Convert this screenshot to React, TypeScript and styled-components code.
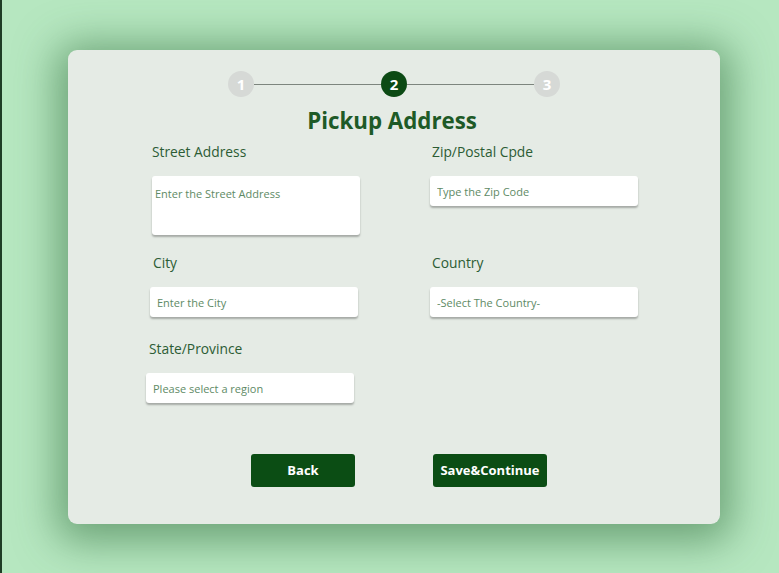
import React from "react";
import styled, { createGlobalStyle } from "styled-components";

const Global = createGlobalStyle`
  html, body { margin: 0; padding: 0; }
  body {
    background: #b6e7c0;
    font-family: "Open Sans", "Noto Sans", sans-serif;
    border-left: 2px solid #1f3d26;
    min-height: 573px;
    box-sizing: border-box;
  }
`;

const Page = styled.div`
  height: 573px;
  padding-top: 50px;
  padding-left: 66px;
  box-sizing: border-box;
`;

const Card = styled.div`
  width: 652px;
  height: 474px;
  background: #e5ebe5;
  border-radius: 9px;
  box-shadow: 0 6px 40px 12px rgba(50, 110, 60, 0.55);
  box-sizing: border-box;
  padding-top: 21px;
  display: flex;
  flex-direction: column;
`;

const Stepper = styled.div`
  display: flex;
  align-items: center;
  justify-content: center;
  padding-left: 0px;
`;

const Step = styled.div<{ $active?: boolean }>`
  width: 26px;
  height: 26px;
  border-radius: 50%;
  background: ${(p) => (p.$active ? "#0c4a14" : "#d6d9d6")};
  color: #ffffff;
  font-weight: 700;
  font-size: 15px;
  display: flex;
  align-items: center;
  justify-content: center;
  flex-shrink: 0;
`;

const Connector = styled.div`
  width: 127px;
  height: 1px;
  background: #7d857e;
`;

const Title = styled.h1`
  margin: 9px 0 0;
  text-align: center;
  font-size: 22.3px;
  font-weight: 700;
  color: #1e5a27;
  line-height: 30px;
  padding-right: 4px;
`;

const FormGrid = styled.div`
  display: grid;
  grid-template-columns: 210px 210px;
  column-gap: 71px;
  row-gap: 19px;
  margin-top: 7px;
  margin-left: 82px;
  align-items: start;
`;

const Field = styled.div<{ $dx?: number; $dy?: number }>`
  display: flex;
  flex-direction: column;
  margin-left: ${(p) => p.$dx ?? 0}px;
  margin-top: ${(p) => p.$dy ?? 0}px;
`;

const Label = styled.label<{ $lx?: number }>`
  font-size: 13.8px;
  line-height: 18px;
  color: #2c5c34;
  margin-left: ${(p) => p.$lx ?? 2}px;
  margin-bottom: 15px;
`;

const Input = styled.input<{ $tall?: boolean }>`
  width: 208px;
  height: ${(p) => (p.$tall ? 59 : 30)}px;
  box-sizing: border-box;
  border: none;
  border-radius: 3px;
  background: #ffffff;
  box-shadow: 0 2px 2px rgba(0, 0, 0, 0.28);
  font-family: inherit;
  font-size: 11px;
  color: #3f7048;
  padding: ${(p) => (p.$tall ? "0 7px 24px 3px" : "0 7px 0 7px")};
  outline: none;
  &::placeholder {
    color: #5e8a65;
  }
`;

const Buttons = styled.div`
  display: flex;
  gap: 78px;
  margin-top: 51px;
  margin-left: 183px;
`;

const Button = styled.button<{ $w: number }>`
  width: ${(p) => p.$w}px;
  height: 33px;
  border: none;
  border-radius: 3px;
  background: #0b4d14;
  color: #ffffff;
  font-family: inherit;
  font-weight: 700;
  font-size: 13px;
  padding: 0 0 2px;
  cursor: pointer;
`;

export default function App() {
  return (
    <>
      <Global />
      <Page>
        <Card>
          <Stepper>
            <Step>1</Step>
            <Connector />
            <Step $active>2</Step>
            <Connector />
            <Step>3</Step>
          </Stepper>
          <Title>Pickup Address</Title>
          <FormGrid>
            <Field $dx={2}>
              <Label $lx={0}>Street Address</Label>
              <Input $tall placeholder="Enter the Street Address" />
            </Field>
            <Field $dx={-1}>
              <Label>Zip/Postal Cpde</Label>
              <Input placeholder="Type the Zip Code" />
            </Field>
            <Field $dx={0}>
              <Label $lx={3}>City</Label>
              <Input placeholder="Enter the City" />
            </Field>
            <Field $dx={-1}>
              <Label>Country</Label>
              <Input placeholder="-Select The Country-" />
            </Field>
            <Field $dx={-4} $dy={4}>
              <Label $lx={3}>State/Province</Label>
              <Input placeholder="Please select a region" />
            </Field>
          </FormGrid>
          <Buttons>
            <Button $w={104}>Back</Button>
            <Button $w={114}>Save&amp;Continue</Button>
          </Buttons>
        </Card>
      </Page>
    </>
  );
}
